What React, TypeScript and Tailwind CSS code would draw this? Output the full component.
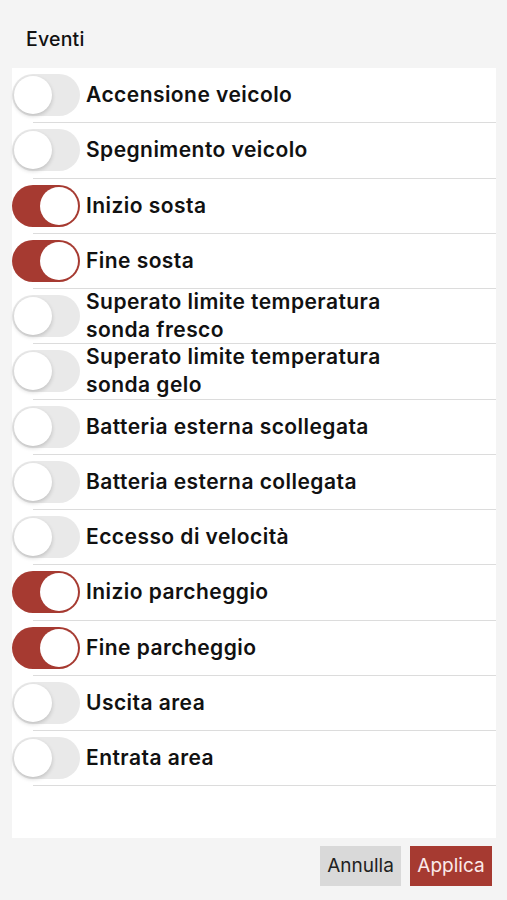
import React, { useState } from "react";

type Item = { label: React.ReactNode; on: boolean; key: string };

const initial: Item[] = [
  { key: "a", label: "Accensione veicolo", on: false },
  { key: "b", label: "Spegnimento veicolo", on: false },
  { key: "c", label: "Inizio sosta", on: true },
  { key: "d", label: "Fine sosta", on: true },
  { key: "e", label: <>Superato limite temperatura<br />sonda fresco</>, on: false },
  { key: "f", label: <>Superato limite temperatura<br />sonda gelo</>, on: false },
  { key: "g", label: "Batteria esterna scollegata", on: false },
  { key: "h", label: "Batteria esterna collegata", on: false },
  { key: "i", label: "Eccesso di velocità", on: false },
  { key: "j", label: "Inizio parcheggio", on: true },
  { key: "k", label: "Fine parcheggio", on: true },
  { key: "l", label: "Uscita area", on: false },
  { key: "m", label: "Entrata area", on: false },
];

function Toggle({ on, onClick }: { on: boolean; onClick: () => void }) {
  return (
    <button
      onClick={onClick}
      className={
        "relative w-[68px] h-[42px] rounded-full shrink-0 " +
        (on ? "bg-[#a63a31]" : "bg-[#e9e9e9]")
      }
    >
      <span
        className={
          "absolute top-[2px] w-[38px] h-[38px] rounded-full bg-white " +
          (on ? "left-[28px]" : "left-[2px] shadow-[0_2px_4px_rgba(0,0,0,0.18)]")
        }
      />
    </button>
  );
}

export default function App() {
  const [items, setItems] = useState(initial);
  const font = { fontFamily: "Inter, 'Noto Sans', sans-serif" };
  return (
    <div className="w-[507px] h-[900px] bg-[#f4f4f4] flex flex-col" style={font}>
      <div className="h-[68px] flex items-center pl-[26px] pt-[12px] text-[19.5px] font-medium text-[#111] tracking-[0.2px]">
        Eventi
      </div>
      <div className="mx-[12px] mr-[11px] h-[770px] bg-white flex flex-col">
        {items.map((it, i) => (
          <div key={it.key} className="flex flex-col">
            <div className="h-[54.25px] flex items-center">
              <Toggle
                on={it.on}
                onClick={() =>
                  setItems(items.map((x, j) => (j === i ? { ...x, on: !x.on } : x)))
                }
              />
              <div className="ml-[6px] text-[21px] leading-[28px] font-semibold text-[#111] tracking-[0.45px]">
                {it.label}
              </div>
            </div>
            <div className="ml-[21px] h-px bg-[#dcdcdc]" />
          </div>
        ))}
      </div>
      <div className="flex justify-end gap-[9px] pr-[15px] pt-[8px]">
        <button className="w-[81px] h-[40px] bg-[#d9d9d9] text-[#222] text-[19px]">Annulla</button>
        <button className="w-[82px] h-[40px] bg-[#a63a31] text-[#fbeaea] text-[19px]">Applica</button>
      </div>
    </div>
  );
}
